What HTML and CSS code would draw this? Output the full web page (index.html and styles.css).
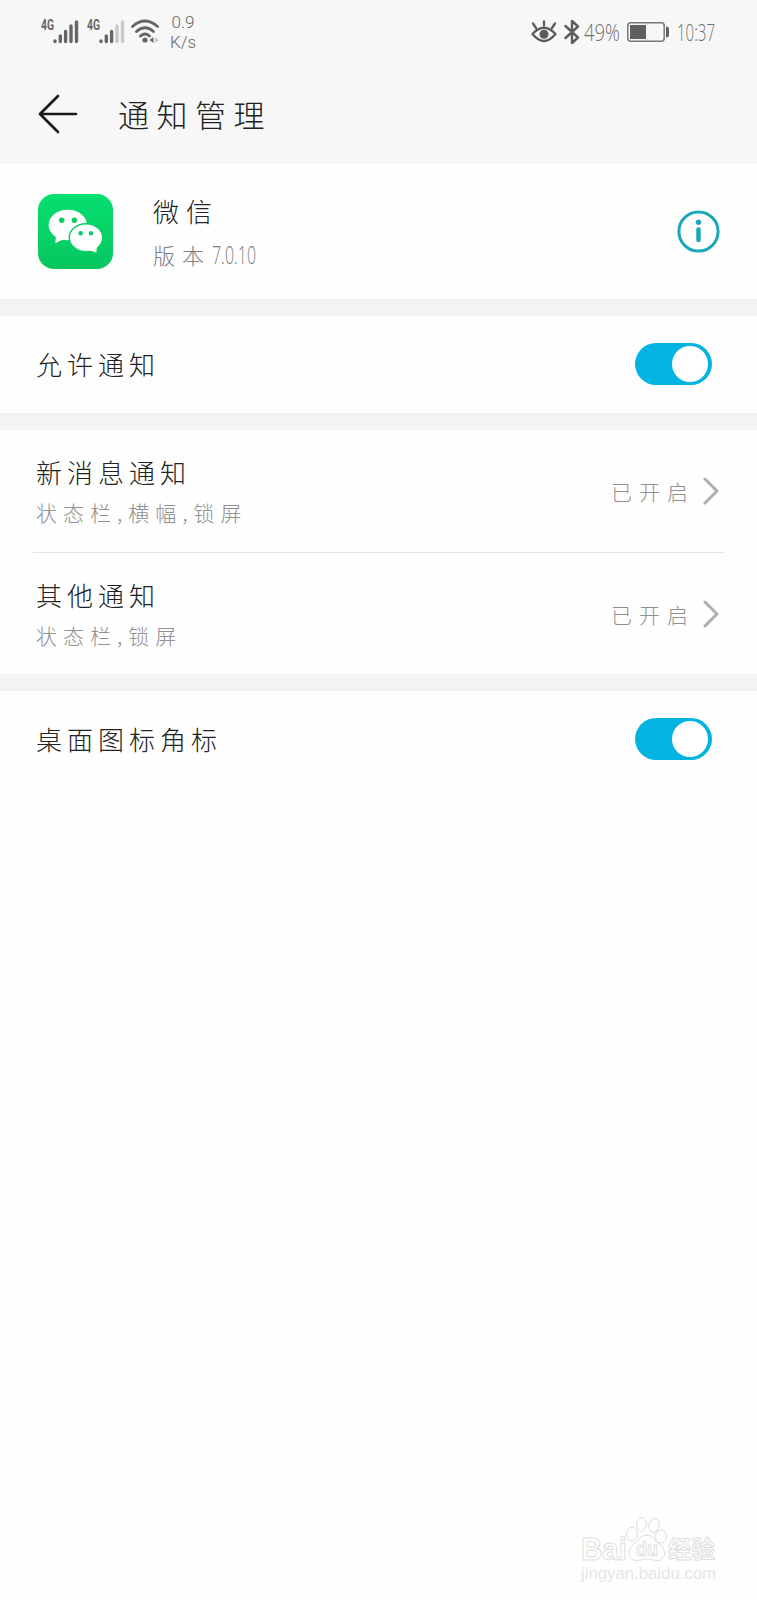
FILE: index.html
```
<!DOCTYPE html>
<html lang="zh-CN">
<head>
    <meta charset="UTF-8">
    <meta name="viewport" content="width=device-width, initial-scale=1.0">
    <title>通知管理</title>
    <link rel="stylesheet" href="styles.css">
</head>
<body>

    <!-- Status bar -->
    <div class="status-bar">
        <svg class="signal" width="38" height="26" viewBox="0 0 38 26">
            <text x="0" y="11" class="net" textLength="13" lengthAdjust="spacingAndGlyphs">4G</text>
            <path d="M14 22V22.5M19.3 17V22.5M24.6 12.5V22.5M30 7V22.5M35.5 3V22.5"/>
        </svg>
        <svg class="signal second" width="38" height="26" viewBox="0 0 38 26">
            <text x="0" y="11" class="net" textLength="13" lengthAdjust="spacingAndGlyphs">4G</text>
            <path d="M14 22V22.5M19.3 17V22.5M24.6 12.5V22.5"/>
            <path class="off" d="M30 7V22.5M35.5 3V22.5"/>
        </svg>
        <svg class="wifi" width="28" height="26" viewBox="0 0 28 26">
            <path d="M1.5 7.5Q14 -3.5 26.5 7.5M5.5 12.5Q14 5 22.5 12.5M9.5 17Q14 13 18.5 17"/>
            <circle cx="14" cy="21" r="2.6"/>
            <path class="arrow" d="M22.5 18V24L18.5 21Z"/>
            <path class="arrow off" d="M24 18V24L28 21Z"/>
        </svg>
        <div class="speed">0.9<br>K/s</div>

        <div class="status-right">
            <svg class="eye" width="26" height="24" viewBox="0 0 26 24">
                <path d="M1.5 14Q13 1.5 24.5 14Q13 28 1.5 14ZM13 5.5V1.5M5 8L2 3.5M21 8L24 3.5"/>
                <circle cx="13" cy="14.3" r="4.5"/>
            </svg>
            <svg class="bluetooth" width="16" height="26" viewBox="0 0 16 26">
                <path d="M1.5 7L14 18.5L8 24V2L14 7.5L1.5 19"/>
            </svg>
            <svg class="percent" width="37" height="36" viewBox="0 0 37 36">
                <text x="0" y="27" textLength="36" lengthAdjust="spacingAndGlyphs">49%</text>
            </svg>
            <svg class="battery" width="43" height="20" viewBox="0 0 43 20">
                <rect x="0.8" y="0.8" width="36.4" height="18.4" rx="3"/>
                <path d="M3 3H19V17H3ZM39 4.5Q42 4.5 42 7V13Q42 15.5 39 15.5Z"/>
            </svg>
            <svg class="clock" width="40" height="36" viewBox="0 0 40 36">
                <text x="0" y="27" textLength="38" lengthAdjust="spacingAndGlyphs">10:37</text>
            </svg>
        </div>
    </div>

    <!-- Title bar -->
    <div class="title-bar">
        <svg class="back" width="40" height="40" viewBox="0 0 40 40">
            <path d="M38 20H2.5M20 2L2 20L20 38"/>
        </svg>
        <h1>通知管理</h1>
    </div>

    <!-- App info -->
    <div class="app-row">
        <svg class="app-icon" width="75" height="75" viewBox="0 0 75 75">
            <defs>
                <linearGradient id="green" x1="0" y1="0" x2="0" y2="1">
                    <stop offset="0" stop-color="#06df70"/>
                    <stop offset="1" stop-color="#07c65f"/>
                </linearGradient>
            </defs>
            <rect width="75" height="75" rx="16" fill="url(#green)"/>
            <path class="bubble" d="M18 41L17.3 49.2L26 45Z"/>
            <ellipse class="bubble" cx="29.8" cy="31" rx="19.2" ry="15.3"/>
            <ellipse cx="48" cy="43.7" rx="17.4" ry="14.7" fill="#07cf66"/>
            <ellipse class="bubble" cx="48" cy="43.7" rx="16" ry="13.3"/>
            <path class="bubble" d="M50 56L58.4 58.6L59 51Z"/>
            <g fill="#07ce66">
                <circle cx="23.7" cy="26.3" r="2.7"/>
                <circle cx="36.4" cy="26.3" r="2.7"/>
                <circle cx="42.7" cy="39.3" r="2.2"/>
                <circle cx="53" cy="39.3" r="2.2"/>
            </g>
        </svg>
        <div class="app-text">
            <div class="app-name">微信</div>
            <div class="app-version">版本
                <svg width="46" height="38" viewBox="0 0 46 38">
                    <text x="0" y="29" textLength="44" lengthAdjust="spacingAndGlyphs">7.0.10</text>
                </svg>
            </div>
        </div>
        <svg class="info" width="43" height="43" viewBox="0 0 43 43">
            <circle cx="21.5" cy="21.5" r="19.6"/>
            <path d="M21.5 19.5V30"/>
            <circle class="dot" cx="21.5" cy="12.3" r="2.7"/>
        </svg>
    </div>

    <div class="row">
        <div class="label">允许通知</div>
        <div class="toggle"></div>
    </div>

    <!-- Notification channels -->
    <div class="group">
        <div class="channel">
            <div class="channel-text">
                <div class="label">新消息通知</div>
                <div class="sub">状态栏,横幅,锁屏</div>
            </div>
            <div class="state">已开启</div>
            <svg class="chevron" width="16" height="28" viewBox="0 0 16 28">
                <path d="M2 2L14 14L2 26"/>
            </svg>
        </div>
        <div class="channel">
            <div class="channel-text">
                <div class="label">其他通知</div>
                <div class="sub">状态栏,锁屏</div>
            </div>
            <div class="state">已开启</div>
            <svg class="chevron" width="16" height="28" viewBox="0 0 16 28">
                <path d="M2 2L14 14L2 26"/>
            </svg>
        </div>
    </div>

    <div class="row">
        <div class="label">桌面图标角标</div>
        <div class="toggle"></div>
    </div>

    <!-- Watermark -->
    <svg class="watermark" width="140" height="72" viewBox="0 0 140 72">
        <g class="outline">
            <text x="1" y="45" class="latin" textLength="46" lengthAdjust="spacingAndGlyphs">Bai</text>
            <ellipse cx="52" cy="19" rx="5.5" ry="7"/>
            <ellipse cx="61.5" cy="9.5" rx="5" ry="7"/>
            <ellipse cx="74" cy="10.5" rx="5" ry="7" transform="rotate(15 74 10.5)"/>
            <ellipse cx="81" cy="21.5" rx="5.5" ry="6.5"/>
            <path d="M67 20C61 20 59 25 55 28C49 32 47 39 51 43C55 48 61 44 67 44C73 44 79 48 83 43C87 38 83 31 78 28C74 25 73 20 67 20Z"/>
            <text x="56" y="41" class="du" textLength="22" lengthAdjust="spacingAndGlyphs">du</text>
            <text x="88" y="43" class="hanzi" textLength="47" lengthAdjust="spacingAndGlyphs">经验</text>
        </g>
        <text x="1" y="64" class="url" textLength="135" lengthAdjust="spacingAndGlyphs">jingyan.baidu.com</text>
    </svg>

</body>
</html>
```

FILE: styles.css
```
* {
    box-sizing: border-box;
}

body {
    margin: 0;
    min-height: 1600px;
    position: relative;
    background-color: #fefefe;
    color: #222;
    font-family: "Noto Sans CJK SC", sans-serif;
    font-weight: 300;
}

svg {
    display: block;
    flex-shrink: 0;
    fill: none;
    stroke-linecap: round;
    stroke-linejoin: round;
}

/* Status bar */
.status-bar {
    display: flex;
    align-items: center;
    height: 64px;
    padding: 0 40px 0 41px;
    background-color: #f7f7f7;
}

.signal {
    stroke: #666;
    stroke-width: 3.4;
}

.signal .off {
    stroke: #c9c9c9;
}

.net {
    fill: #666;
    stroke: none;
    font-family: Roboto, sans-serif;
    font-size: 14px;
    font-weight: 700;
}

.second {
    margin-left: 8px;
}

.wifi {
    margin-left: 6px;
    stroke: #666;
    stroke-width: 2.8;
}

.wifi circle, .wifi .arrow {
    fill: #666;
    stroke: none;
}

.wifi .off {
    fill: #c9c9c9;
}

.speed {
    margin-left: 11px;
    color: #666;
    font-family: Roboto, sans-serif;
    font-size: 17px;
    font-weight: 300;
    line-height: 20px;
    text-align: center;
}

.status-right {
    display: flex;
    align-items: center;
    margin-left: auto;
}

.status-right text {
    fill: #707070;
    font-family: "Open Sans", sans-serif;
    font-size: 23px;
    font-weight: 300;
}

.eye {
    stroke: #5c5c5c;
    stroke-width: 2.3;
}

.eye circle {
    fill: #5c5c5c;
    stroke: none;
}

.bluetooth {
    margin-left: 7px;
    stroke: #5c5c5c;
    stroke-width: 2.4;
}

.percent {
    margin-left: 4px;
}

.battery {
    margin-left: 6px;
}

.battery rect {
    stroke: #777;
    stroke-width: 1.5;
}

.battery path {
    fill: #606060;
}

.clock {
    margin-left: 7px;
}

/* Title bar */
.title-bar {
    display: flex;
    align-items: center;
    height: 100px;
    padding-left: 38px;
    background-color: #f7f7f7;
}

.back {
    stroke: #1a1a1a;
    stroke-width: 2.7;
}

h1 {
    margin: 0 0 0 40px;
    font-size: 31px;
    font-weight: 300;
    letter-spacing: 7.5px;
    line-height: 40px;
}

/* App info */
.app-row {
    display: flex;
    align-items: center;
    height: 135px;
    padding: 0 37px 0 38px;
}

.bubble {
    fill: #fff;
}

.app-text {
    margin-left: 40px;
}

.app-name {
    font-size: 26px;
    letter-spacing: 7px;
    line-height: 44px;
}

.app-version {
    display: flex;
    align-items: center;
    gap: 1px;
    color: #808080;
    font-size: 22px;
    letter-spacing: 7px;
    line-height: 42px;
}

.app-version text {
    fill: #808080;
    font-family: "Open Sans", sans-serif;
    font-size: 25px;
    letter-spacing: 0;
}

.info {
    margin-left: auto;
    stroke: #1ba6ba;
    stroke-width: 3;
}

.info path {
    stroke-width: 4.5;
}

.info .dot {
    fill: #1ba6ba;
    stroke: none;
}

/* Setting rows */
.row {
    display: flex;
    align-items: center;
    justify-content: space-between;
    height: 114px;
    padding: 0 45px 2px 36px;
    border-top: 17px solid #f3f3f3;
}

.label {
    font-size: 26px;
    letter-spacing: 5px;
    line-height: 40px;
}

.toggle {
    display: flex;
    justify-content: flex-end;
    width: 77px;
    height: 42px;
    padding: 3px 4px;
    border-radius: 21px;
    background-color: #03b4e3;
}

.toggle::after {
    content: "";
    width: 36px;
    height: 36px;
    border-radius: 50%;
    background-color: #fff;
}

.group {
    padding: 0 33px;
    border-top: 17px solid #f3f3f3;
}

.channel {
    display: flex;
    align-items: center;
    height: 122px;
    padding: 0 5px 0 3px;
}

.channel + .channel {
    border-top: 1px solid #e2e2e2;
}

.channel-text {
    flex: 1;
    padding-top: 3px;
}

.sub {
    color: #909090;
    font-size: 21px;
    letter-spacing: 6px;
    line-height: 41px;
}

.state {
    color: #909090;
    font-size: 21px;
    letter-spacing: 7px;
}

.chevron {
    margin-left: 8px;
    stroke: #b0b0b0;
    stroke-width: 3;
}

/* Watermark */
.watermark {
    position: absolute;
    right: 37px;
    bottom: 13px;
}

.outline {
    fill: #fefefe;
    stroke: #dedede;
    stroke-width: 1;
}

.latin, .du {
    font-family: "Liberation Sans", sans-serif;
    font-size: 31px;
    font-weight: 700;
}

.du {
    font-size: 20px;
}

.hanzi {
    font-size: 24px;
    font-weight: 700;
}

.url {
    fill: #e6e6e6;
    font-family: "Liberation Sans", sans-serif;
    font-size: 16px;
    font-weight: 400;
}
```
